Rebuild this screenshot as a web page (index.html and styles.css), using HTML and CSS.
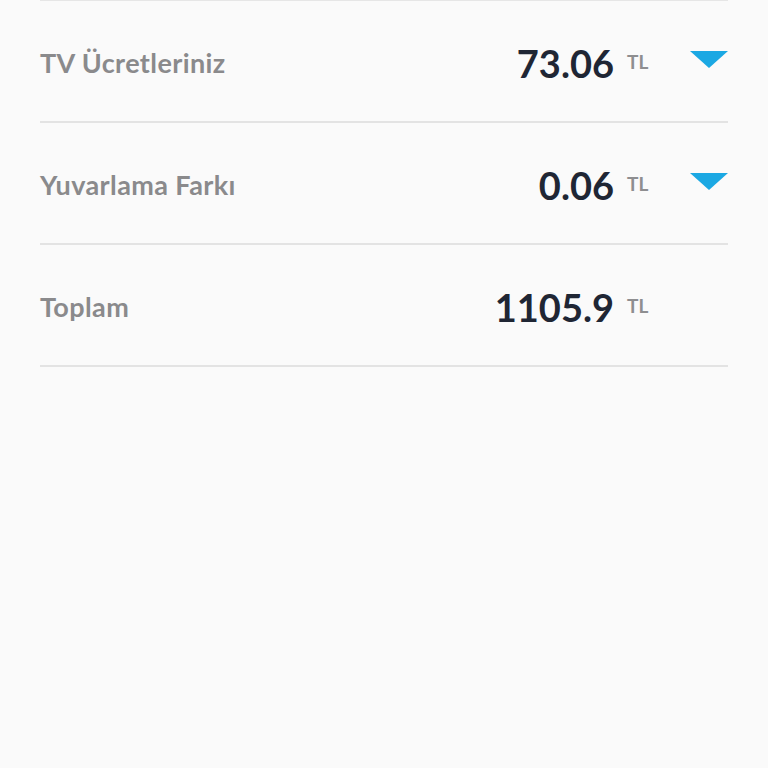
FILE: index.html
```html
<!DOCTYPE html>
<html lang="tr">
<head>
<meta charset="utf-8">
<link rel="stylesheet" href="styles.css">
</head>
<body>
<div class="list">
  <div class="row">
    <div class="label">TV Ücretleriniz</div>
    <div class="amount"><span class="value">73.06</span><span class="unit">TL</span></div>
    <div class="arrow"><svg width="38" height="17" viewBox="0 0 38 17"><polygon points="0,0 38,0 19,17" fill="#1ba8e3"/></svg></div>
  </div>
  <div class="row">
    <div class="label">Yuvarlama Farkı</div>
    <div class="amount"><span class="value">0.06</span><span class="unit">TL</span></div>
    <div class="arrow"><svg width="38" height="17" viewBox="0 0 38 17"><polygon points="0,0 38,0 19,17" fill="#1ba8e3"/></svg></div>
  </div>
  <div class="row">
    <div class="label">Toplam</div>
    <div class="amount"><span class="value">1105.9</span><span class="unit">TL</span></div>
    <div class="arrow"></div>
  </div>
</div>
</body>
</html>
```
FILE: styles.css
```css
html, body {
  margin: 0;
  padding: 0;
  background: #fafafa;
  font-family: Lato, "Open Sans", sans-serif;
}
.list {
  margin: 0 40px;
  border-top: 1px solid #e6e6e6;
}
.row {
  display: flex;
  align-items: center;
  box-sizing: border-box;
  height: 122px;
  padding-top: 3px;
  border-bottom: 2px solid #e3e3e3;
}
.label {
  flex: 1;
  font-size: 27px;
  font-weight: 700;
  color: #8a8a8c;
  letter-spacing: 0.4px;
}
.amount {
  display: flex;
  align-items: center;
  gap: 13px;
}
.value {
  font-size: 38px;
  font-weight: 700;
  color: #1f2634;
}
.unit {
  font-size: 19px;
  font-weight: 700;
  color: #8e8e90;
  width: 22px;
  margin-top: -3px;
}
.arrow {
  width: 38px;
  height: 17px;
  margin-left: 41px;
  margin-top: -6px;
  display: flex;
}
```
